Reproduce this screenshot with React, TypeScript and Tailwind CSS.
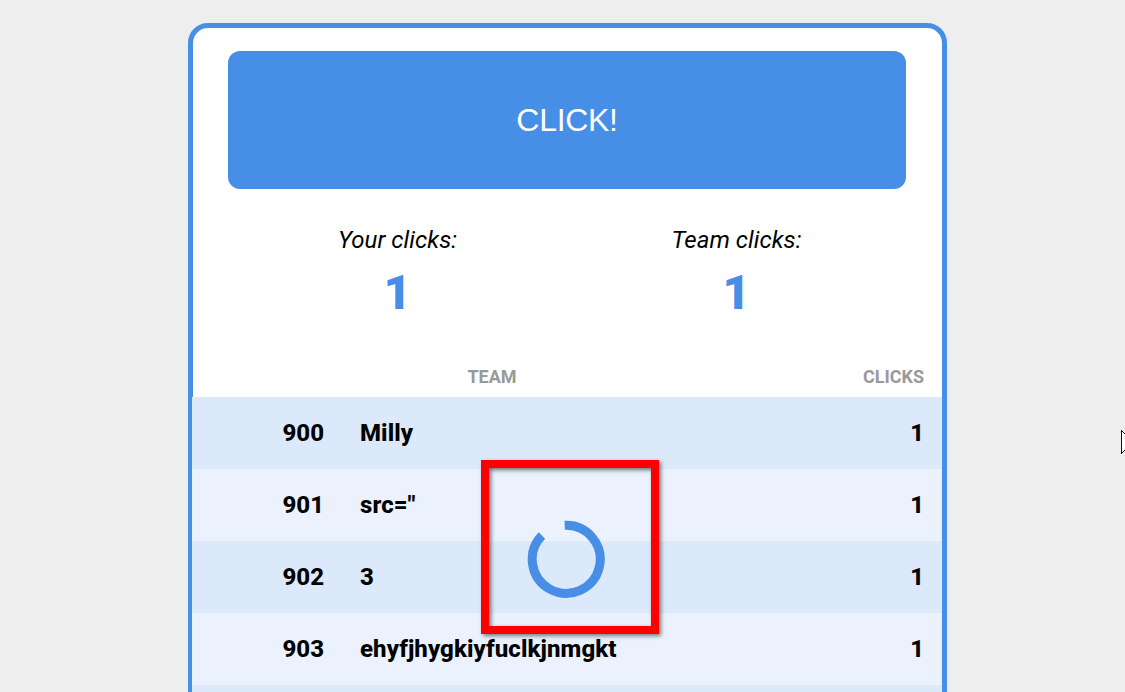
const rows = [
  { rank: 900, team: 'Milly', clicks: 1 },
  { rank: 901, team: 'src="', clicks: 1 },
  { rank: 902, team: '3', clicks: 1 },
  { rank: 903, team: 'ehyfjhygkiyfuclkjnmgkt', clicks: 1 },
];

function Counter({ label, value }: { label: string; value: number }) {
  return (
    <div className="flex w-[339px] flex-col items-center">
      <span className="text-[24px] leading-8 tracking-[0.06px] italic">{label}</span>
      <span className="mt-[13px] text-[48px] leading-[48px] font-black text-[#478ee6]">{value}</span>
    </div>
  );
}

export default function App() {
  return (
    <div className="relative flex h-[692px] justify-center overflow-hidden bg-[#eeeeee] pt-[23px] pl-[10px] font-[Roboto,sans-serif] text-black">
      <main className="h-[760px] w-[759px] shrink-0 rounded-[20px] border-[5px] border-[#478ee6] bg-white">
        <div className="px-[35px] pt-[23px]">
          <button className="h-[138px] w-[678px] rounded-[12px] bg-[#478ee6] pb-px font-['Liberation_Sans',sans-serif] text-[32px] tracking-[-0.3px] text-white">CLICK!</button>
        </div>
        <div className="flex h-[168px] px-[35px] pt-[35px]">
          <Counter label="Your clicks:" value={1} />
          <Counter label="Team clicks:" value={1} />
        </div>
        <div className="flex h-10 items-center pb-0.5 text-[18px] font-bold text-[#999999]">
          <span className="w-[598px] text-center">TEAM</span>
          <span className="flex-1 pr-[18px] text-right">CLICKS</span>
        </div>
        <div className="-ml-px bg-[#dce9fa]">
          {rows.map((r) => (
            <div key={r.rank} className="flex h-[72px] items-center text-[24px] font-extrabold even:bg-[#ebf2fd]">
              <span className="w-[132px] text-right">{r.rank}</span>
              <span className="flex-1 pl-9 tracking-[0.08px]">{r.team}</span>
              <span className="pr-[18px]">{r.clicks}</span>
            </div>
          ))}
          <div className="h-[72px]" />
        </div>
      </main>
      <div className="absolute top-[460px] left-[481px] h-[174px] w-[178px] border-8 border-[#ff0000] shadow-[2px_2px_4px_rgba(0,0,0,0.5),inset_2px_2px_4px_rgba(0,0,0,0.55)]" />
      <svg className="absolute top-[519px] left-[526px] h-20 w-20" viewBox="0 0 80 80" fill="none">
        <path d="M38.7 6.3A34 34 0 1 1 15.9 16.5" stroke="#478ee6" strokeWidth="9" />
      </svg>
      <svg className="absolute top-[430px] left-[1121px] h-6 w-1" viewBox="0 0 4 24" shapeRendering="crispEdges">
        <path d="M0.5 0.5L16.5 16.5H7.5L0.5 23.5Z" fill="white" stroke="#111122" />
      </svg>
    </div>
  );
}
